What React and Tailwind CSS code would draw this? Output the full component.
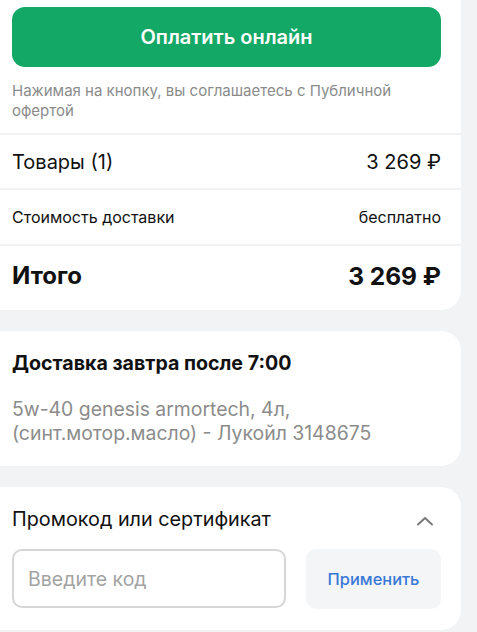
import React from 'react';

const Row = ({ left, right, className, pad }) => (
    <div className={`flex items-center justify-between border-t-2 border-[#f1f2f4] pl-3 pr-5 ${pad}`}>
        <span className={className}>{left}</span>
        <span className={className}>{right}</span>
    </div>
);

export default function App() {
    return (
        <div className="min-h-[632px] bg-[#f2f3f5] pr-4 font-['Inter',sans-serif] text-[#111]">
            <div className="flex flex-col gap-[21px] pb-4">

                {/* Payment summary */}
                <div className="bg-white rounded-br-[20px]">
                    <div className="pl-3 pr-5 pt-[7px] pb-3">
                        <button className="w-full h-[60px] rounded-[13px] bg-[#13a866] text-white text-[20px] font-semibold">
                            Оплатить онлайн
                        </button>
                        <p className="mt-[14px] text-[15px] leading-5 text-[#8b8b8b]">
                            Нажимая на кнопку, вы соглашаетесь с Публичной офертой
                        </p>
                    </div>
                    <Row left="Товары (1)" right="3 269 ₽" className="text-[20px] leading-6" pad="h-[55px]" />
                    <Row left="Стоимость доставки" right="бесплатно" className="text-[16px] leading-5" pad="h-[56px]" />
                    <div className="flex items-center justify-between border-t-2 border-[#f1f2f4] pl-3 pr-5 pt-4 pb-5">
                        <span className="text-[24px] leading-7 font-bold">Итого</span>
                        <span className="text-[24.5px] leading-7 font-bold">3 269 ₽</span>
                    </div>
                </div>

                {/* Delivery */}
                <div className="bg-white rounded-r-[20px] pl-3 pr-5 pt-5 pb-[21px]">
                    <h2 className="text-[19.6px] leading-6 font-bold">Доставка завтра после 7:00</h2>
                    <p className="mt-[22px] text-[19.4px] leading-6 text-[#8c8c8c]">
                        5w-40 genesis armortech, 4л,<br />
                        (синт.мотор.масло) - Лукойл 3148675
                    </p>
                </div>

                {/* Promo code */}
                <div className="bg-white rounded-r-[20px] pl-3 pr-5 pt-5 pb-[21px]">
                    <div className="flex items-center justify-between">
                        <span className="text-[19.8px] leading-6">Промокод или сертификат</span>
                        <svg width="18" height="10" viewBox="0 0 18 10" fill="none" className="mr-[7px] mt-1">
                            <path d="M2 8.5L9 2l7 6.5" stroke="#7a7a7a" strokeWidth="2" strokeLinecap="round" strokeLinejoin="round" />
                        </svg>
                    </div>
                    <div className="mt-[18px] flex gap-5">
                        <input
                            placeholder="Введите код"
                            className="flex-1 min-w-0 h-[59px] rounded-[10px] border-2 border-[#d6d6d6] px-[14px] text-[19.5px] placeholder:text-[#a3a3a3] outline-none"
                        />
                        <button className="w-[135px] h-[60px] rounded-[10px] bg-[#f3f5f7] text-[16.4px] font-medium text-[#3a78d6]">
                            Применить
                        </button>
                    </div>
                </div>

            </div>
        </div>
    );
}
